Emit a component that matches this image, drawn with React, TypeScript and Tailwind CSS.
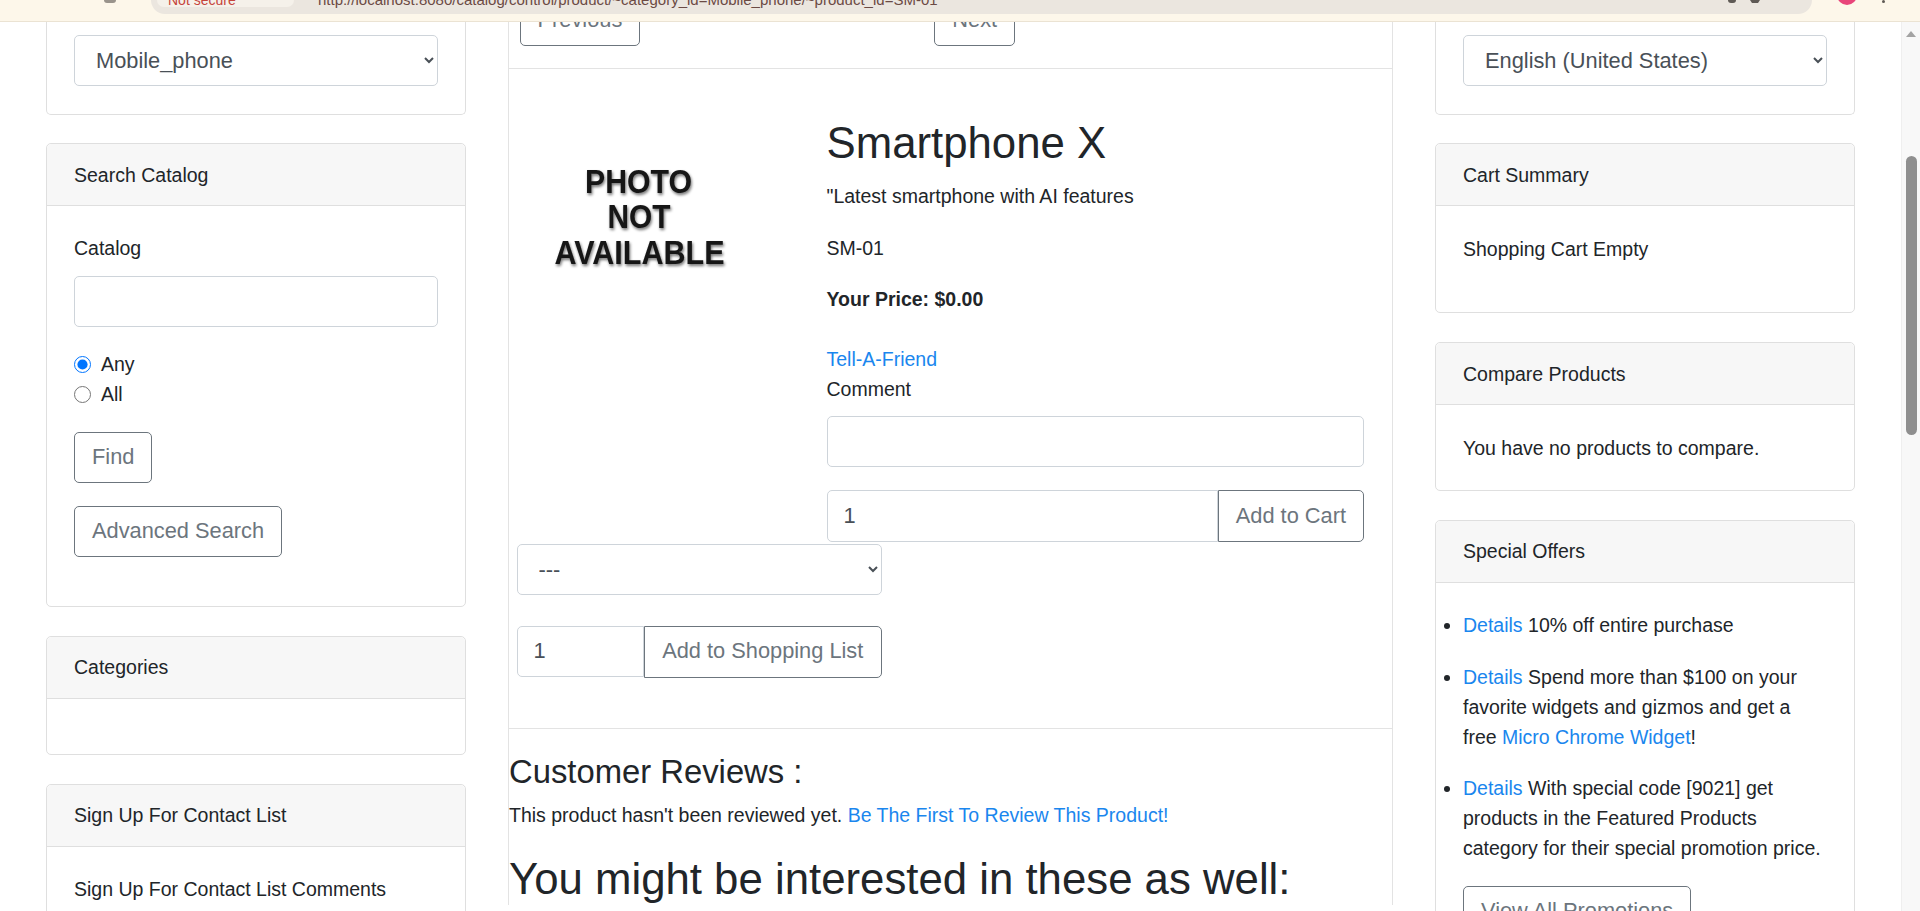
import type { ReactNode } from "react";

const cardBorder = "border-[#dfdfdf]";
const link = "text-[#1a86ee]";
const btn =
  "h-[51px] px-[17px] border border-[#6c757d] rounded-[5px] text-[#6c757d] text-[21.8px] leading-[1.5] bg-white whitespace-nowrap";
const field =
  "h-[51px] border border-[#ced4da] rounded-[5px] bg-white text-[21.8px] text-[#495057] leading-[1.5]";

function CutCard({ value }: { value: string }) {
  return (
    <div className={`border-x border-b ${cardBorder} rounded-b-[5px] px-[27px] pt-[13px] pb-[28px]`}>
      <select className={`${field} w-full pl-[17px] pr-[8px]`} defaultValue={value}>
        <option>{value}</option>
      </select>
    </div>
  );
}

function Card({ title, children, className = "" }: { title: string; children?: ReactNode; className?: string }) {
  return (
    <div className={`border ${cardBorder} rounded-[5px] bg-white ${className}`}>
      <div className={`h-[62px] flex items-center px-[27px] bg-[#f7f7f7] border-b ${cardBorder} rounded-t-[5px]`}>
        {title}
      </div>
      {children}
    </div>
  );
}

function BrowserBar() {
  return (
    <div className="h-[22px] shrink-0 bg-[#fdf7ea] border-b border-[#ebe3d3] flex items-start overflow-hidden">
      <div className="w-[151px] shrink-0 flex items-start pl-[104px] gap-[10px]">
        <div className="w-[12px] h-[3px] rounded-b-full bg-[#9a948c]" />
      </div>
      <div className="w-[1661px] shrink-0 h-[14px] bg-[#ebe6df] rounded-b-[14px] flex items-start overflow-hidden">
        <div className="ml-[6px] w-[137px] h-[7px] bg-[#f5f1ea] rounded-b-[8px] overflow-hidden">
          <div className="-mt-[15px] pl-[11px] text-[14px] text-[#c5443b] whitespace-nowrap">Not secure</div>
        </div>
        <div className="ml-[24px] -mt-[15px] text-[15px] text-[#6b4a44] whitespace-nowrap">
          http://localhost:8080/catalog/control/product/~category_id=Mobile_phone/~product_id=SM-01
        </div>
        <div className="ml-auto mr-[52px] flex gap-[14px] items-start">
          <div className="w-[8px] h-[3px] rounded-b-full bg-[#5f5a55]" />
          <div className="w-[10px] h-[3px] bg-[#5f5a55] [clip-path:polygon(0_0,100%_0,80%_100%,20%_100%)]" />
        </div>
      </div>
      <div className="ml-[25px] -mt-[15px] w-[20px] h-[20px] rounded-full bg-[#e8457a]" />
      <div className="ml-[25px] w-[3px] h-[3px] rounded-full bg-[#5f5a55]" />
    </div>
  );
}

function Scrollbar() {
  return (
    <div className="w-[19px] shrink-0 bg-[#f8f8f8] border-l border-[#efefef] flex flex-col items-center">
      <div className="mt-[9px] w-0 h-0 border-l-[5px] border-r-[5px] border-b-[6px] border-l-transparent border-r-transparent border-b-[#a3a3a3]" />
      <div className="mt-[119px] w-[11px] h-[279px] rounded-full bg-[#8f8f8f]" />
    </div>
  );
}

function PhotoNotAvailable() {
  return (
    <svg width="246" height="165" viewBox="0 0 246 165">
      <defs>
        <filter id="soft" x="-20%" y="-20%" width="140%" height="140%">
          <feGaussianBlur in="SourceAlpha" stdDeviation="1.8" result="b" />
          <feOffset in="b" dx="0.5" dy="1.5" result="o" />
          <feComponentTransfer in="o" result="s">
            <feFuncA type="linear" slope="0.55" />
          </feComponentTransfer>
          <feMerge>
            <feMergeNode in="s" />
            <feMergeNode in="SourceGraphic" />
          </feMerge>
        </filter>
      </defs>
      <g filter="url(#soft)" fill="#151515" fontFamily="Liberation Sans, Arial, sans-serif" fontWeight="700" fontSize="34">
        <text x="68" y="75.5" textLength="107" lengthAdjust="spacingAndGlyphs">PHOTO</text>
        <text x="90.5" y="110.5" textLength="63" lengthAdjust="spacingAndGlyphs">NOT</text>
        <text x="37.5" y="147" textLength="170" lengthAdjust="spacingAndGlyphs">AVAILABLE</text>
      </g>
    </svg>
  );
}

function LeftColumn() {
  return (
    <div className="w-[420px] shrink-0 flex flex-col">
      <CutCard value="Mobile_phone" />

      <Card title="Search Catalog" className="mt-[28px]">
        <div className="px-[27px] pt-[27px] pb-[49px] flex flex-col items-start">
          <label>Catalog</label>
          <input className={`${field} w-full mt-[12.5px] px-[16px]`} />
          <div className="mt-[22.5px] flex flex-col">
            <label className="flex items-center">
              <input type="radio" name="mode" defaultChecked className="m-0 mr-[10px] w-[17px] h-[17px] accent-[#0075ff]" />
              Any
            </label>
            <label className="flex items-center">
              <input type="radio" name="mode" className="m-0 mr-[10px] w-[17px] h-[17px] accent-[#0075ff]" />
              All
            </label>
          </div>
          <button className={`${btn} mt-[22.5px] h-[50px]`}>Find</button>
          <button className={`${btn} mt-[23px]`}>Advanced Search</button>
        </div>
      </Card>

      <Card title="Categories" className="mt-[29px]">
        <div className="h-[55px]" />
      </Card>

      <Card title="Sign Up For Contact List" className="mt-[29px]">
        <div className="px-[27px] pt-[27px] pb-[27px]">Sign Up For Contact List Comments</div>
      </Card>
    </div>
  );
}

function MiddleColumn() {
  return (
    <div className="flex-1 min-w-0 border-x border-[#e3e3e3]">
      <div className="h-[47px] overflow-hidden flex items-end pl-[10.5px] pb-[22.5px] border-b border-[#e3e3e3]">
        <button className={btn}>Previous</button>
        <button className={`${btn} ml-[294px]`}>Next</button>
      </div>

      <div className="pl-[7.5px] pr-[28px] pb-[50px] border-b border-[#e3e3e3]">
        <div className="flex">
          <div className="w-[310px] shrink-0 pt-[47.5px]">
            <PhotoNotAvailable />
          </div>
          <div className="flex-1 min-w-0 pt-[47.5px]">
            <h1 className="text-[43.75px] leading-[1.2] font-normal mb-[12px]">Smartphone X</h1>
            <p className="mb-[22px]">"Latest smartphone with AI features</p>
            <p className="mb-[21px]">SM-01</p>
            <p className="mb-[30px] font-bold">Your Price: $0.00</p>
            <a className={`block ${link}`}>Tell-A-Friend</a>
            <label className="block mb-[12px]">Comment</label>
            <input className={`${field} w-full px-[16px]`} />
            <div className="mt-[23px] flex h-[52px]">
              <input className={`${field} h-[52px] flex-1 min-w-0 px-[16px] rounded-r-none`} defaultValue="1" />
              <button className={`${btn} h-[52px] rounded-l-none`}>Add to Cart</button>
            </div>
          </div>
        </div>

        <select className={`${field} mt-[1.5px] w-[365px] pl-[17px] pr-[8px] block`} defaultValue="---">
          <option>---</option>
        </select>

        <div className="mt-[31px] flex">
          <input className={`${field} w-[127.5px] px-[16px] rounded-r-none`} defaultValue="1" />
          <button className={`${btn} w-[237.5px] h-[52px] rounded-l-none`}>Add to Shopping List</button>
        </div>
      </div>

      <h3 className="mt-[23px] text-[32.8px] leading-[1.2] font-normal">Customer Reviews :</h3>
      <p className="mt-[9.5px]">
        This product hasn't been reviewed yet. <a className={link}>Be The First To Review This Product!</a>
      </p>
      <h2 className="mt-[22.5px] text-[43.75px] leading-[1.2] font-normal whitespace-nowrap">
        You might be interested in these as well:
      </h2>
    </div>
  );
}

function RightColumn() {
  const offers: ReactNode[] = [
    <>10% off entire purchase</>,
    <>
      Spend more than $100 on your favorite widgets and gizmos and get a free{" "}
      <a className={link}>Micro Chrome Widget</a>!
    </>,
    <>With special code [9021] get products in the Featured Products category for their special promotion price.</>,
  ];
  return (
    <div className="w-[420px] shrink-0 flex flex-col">
      <CutCard value="English (United States)" />

      <Card title="Cart Summary" className="mt-[28px]">
        <div className="px-[27px] pt-[27.5px] pb-[48.5px]">Shopping Cart Empty</div>
      </Card>

      <Card title="Compare Products" className="mt-[29px]">
        <div className="px-[27px] pt-[28px] pb-[26.5px]">You have no products to compare.</div>
      </Card>

      <Card title="Special Offers" className="mt-[29px]">
        <div className="px-[27px] pt-[27.5px] pb-[30px]">
          <ul className="list-disc pl-0 flex flex-col gap-[21.5px]">
            {offers.map((o, i) => (
              <li key={i}>
                <a className={link}>Details</a> {o}
              </li>
            ))}
          </ul>
          <button className={`${btn} mt-[22.5px]`}>View All Promotions</button>
        </div>
      </Card>
    </div>
  );
}

export default function App() {
  return (
    <div className="w-[1920px] h-[911px] overflow-hidden bg-white text-[#212529] font-['Liberation_Sans',Arial,sans-serif] text-[19.5px] leading-[30px] flex flex-col">
      <BrowserBar />
      <div className="flex flex-1 min-h-0">
        <div className="flex-1 min-w-0 flex items-start gap-[42px] px-[46px] overflow-hidden">
          <LeftColumn />
          <MiddleColumn />
          <RightColumn />
        </div>
        <Scrollbar />
      </div>
    </div>
  );
}
